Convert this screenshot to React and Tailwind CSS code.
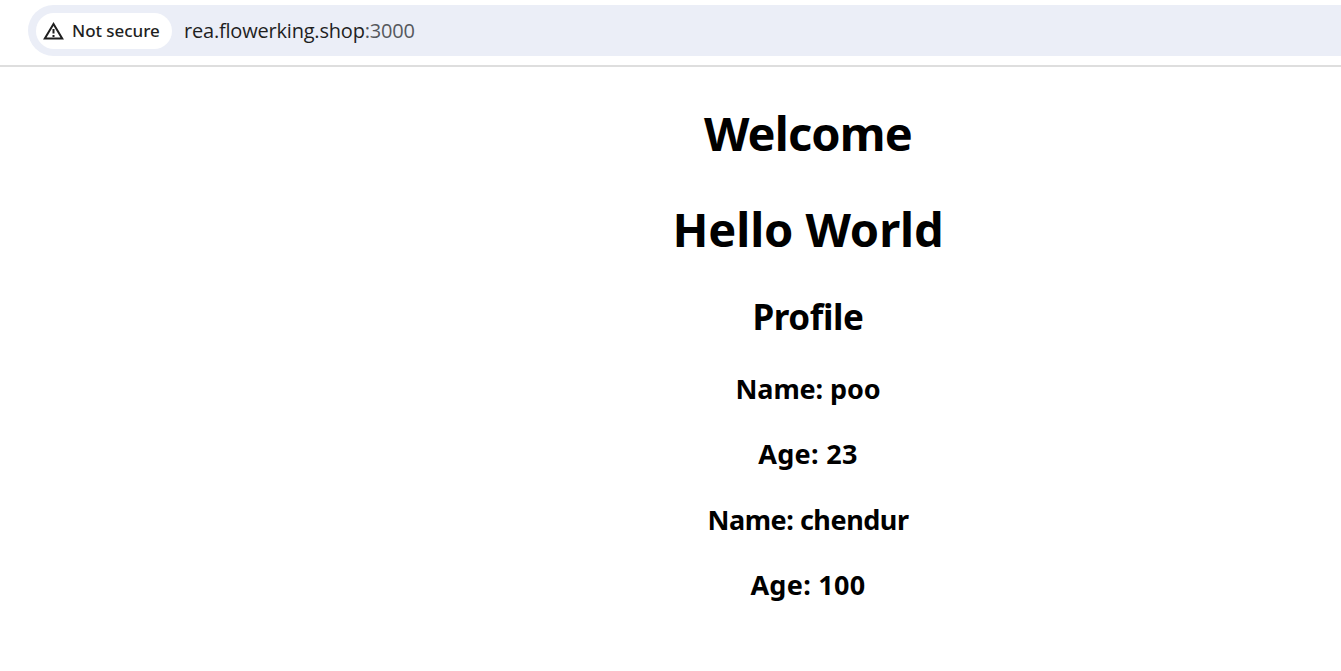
const people = [
  { name: 'poo', age: 23, nameTracking: 'tracking-[-0.1px]' },
  { name: 'chendur', age: 100, nameTracking: 'tracking-[-0.45px]' },
];

function Row({ children, className }) {
  return (
    <h3 className="mt-[25.2px] h-[40px] text-[27px] leading-[40px]">
      <span className={className}>{children}</span>
    </h3>
  );
}

export default function App() {
  return (
    <div className="h-[671px] w-full overflow-hidden bg-white font-['Open_Sans','Noto_Sans',sans-serif] text-black">
      <header className="flex h-[67px] border-b-2 border-[#dedede] pt-[5px] pl-[28px]">
        <div className="flex h-[51px] flex-1 items-center rounded-l-full bg-[#ebeef7] pl-[8px]">
          <div className="flex h-[36px] w-[136px] items-center rounded-full bg-white pl-[7px]">
            <svg width="22" height="20" viewBox="0 0 22 20" fill="none" stroke="#1f1f1f" strokeWidth="2">
              <path d="M10.5 3 1.8 17.5h17.4L10.5 3Z" />
              <path d="M10.5 8v4.5M10.5 14v2" />
            </svg>
            <span className="ml-[7px] font-['Noto_Sans',sans-serif] text-[17px] font-medium tracking-[-0.05px] whitespace-nowrap text-[#1f1f1f]">Not secure</span>
          </div>
          <span className="ml-[12px] text-[20px] tracking-[-0.2px] whitespace-nowrap text-[#1f1f1f]">
            rea.flowerking.shop<span className="text-[#55585d]">:3000</span>
          </span>
        </div>
      </header>
      <main className="flex flex-col items-center pl-[275px] font-['Noto_Sans',sans-serif] font-bold whitespace-nowrap">
        <h1 className="mt-[30px] h-[72px] text-[47px] leading-[72px] tracking-[-0.85px]">Welcome</h1>
        <h1 className="mt-[24px] h-[72px] text-[47px] leading-[72px] tracking-[-0.1px]">Hello World</h1>
        <h2 className="mt-[25px] h-[54px] text-[35px] leading-[54px] tracking-[-0.4px]">Profile</h2>
        {people.map((p) => (
          <div key={p.name} className="flex flex-col items-center">
            <Row className={p.nameTracking}>Name: {p.name}</Row>
            <Row className="tracking-[0.3px]">Age: {p.age}</Row>
          </div>
        ))}
      </main>
    </div>
  );
}
